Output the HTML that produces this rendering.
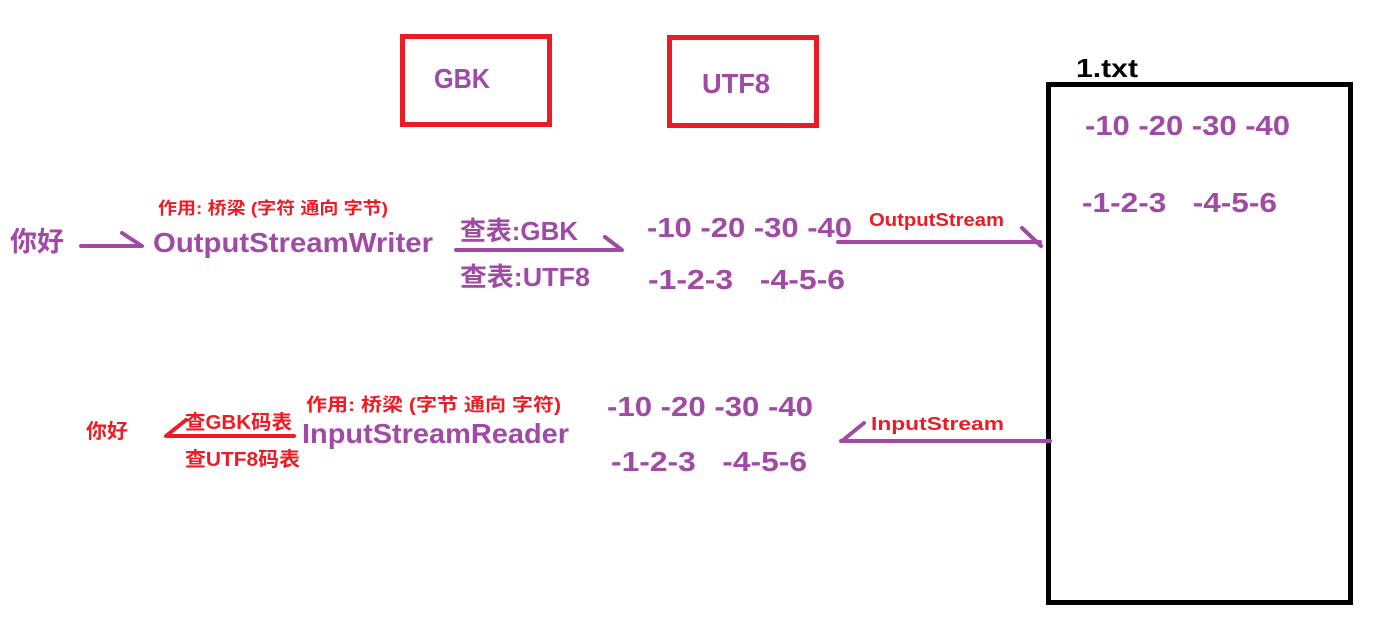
<!DOCTYPE html>
<html><head><meta charset="utf-8"><style>
html,body{margin:0;padding:0;background:#fff;}
svg{display:block}
text{font-family:"Liberation Sans","Noto Sans CJK SC",sans-serif;font-weight:bold;white-space:pre;}
.p{fill:#a04aa6}.r{fill:#ec1c24}.k{fill:#000}
</style></head><body>
<svg width="1394" height="629" viewBox="0 0 1394 629" xmlns="http://www.w3.org/2000/svg" xml:space="preserve">
<rect x="0" y="0" width="1394" height="629" fill="#fff"/>
<rect x="402.5" y="36.5" width="147" height="88" fill="none" stroke="#ec1c24" stroke-width="5"/>
<rect x="669.5" y="37.5" width="147" height="88" fill="none" stroke="#ec1c24" stroke-width="5"/>
<rect x="1048.5" y="84.5" width="302" height="518" fill="none" stroke="#000" stroke-width="5"/>
<text class="p" x="434" y="88" font-size="28" textLength="56" lengthAdjust="spacingAndGlyphs">GBK</text>
<text class="p" x="702" y="93" font-size="28" textLength="68" lengthAdjust="spacingAndGlyphs">UTF8</text>
<text class="k" x="1076" y="77" font-size="26" textLength="62" lengthAdjust="spacingAndGlyphs">1.txt</text>
<text class="p" x="1085" y="135" font-size="28" textLength="205" lengthAdjust="spacingAndGlyphs">-10 -20 -30 -40</text>
<text class="p" x="1082" y="212" font-size="28" textLength="195" lengthAdjust="spacingAndGlyphs">-1-2-3   -4-5-6</text>
<text class="p" x="10" y="251" font-size="27" textLength="54" lengthAdjust="spacingAndGlyphs">你好</text>
<text class="r" x="158" y="214" font-size="17" textLength="230" lengthAdjust="spacingAndGlyphs">作用: 桥梁 (字符 通向 字节)</text>
<text class="p" x="153" y="252" font-size="28" textLength="280" lengthAdjust="spacingAndGlyphs">OutputStreamWriter</text>
<text class="p" x="460" y="240" font-size="26" textLength="118" lengthAdjust="spacingAndGlyphs">查表:GBK</text>
<text class="p" x="460" y="286" font-size="26" textLength="130" lengthAdjust="spacingAndGlyphs">查表:UTF8</text>
<text class="p" x="647" y="237" font-size="28" textLength="205" lengthAdjust="spacingAndGlyphs">-10 -20 -30 -40</text>
<text class="p" x="648" y="289" font-size="28" textLength="197" lengthAdjust="spacingAndGlyphs">-1-2-3   -4-5-6</text>
<text class="r" x="869" y="226" font-size="18" textLength="135" lengthAdjust="spacingAndGlyphs">OutputStream</text>
<text class="r" x="86" y="438" font-size="20" textLength="42" lengthAdjust="spacingAndGlyphs">你好</text>
<text class="r" x="185" y="429" font-size="20" textLength="107" lengthAdjust="spacingAndGlyphs">查GBK码表</text>
<text class="r" x="185" y="466" font-size="20" textLength="115" lengthAdjust="spacingAndGlyphs">查UTF8码表</text>
<text class="r" x="306" y="411" font-size="18" textLength="255" lengthAdjust="spacingAndGlyphs">作用: 桥梁 (字节 通向 字符)</text>
<text class="p" x="302" y="443" font-size="28" textLength="267" lengthAdjust="spacingAndGlyphs">InputStreamReader</text>
<text class="p" x="607" y="416" font-size="28" textLength="206" lengthAdjust="spacingAndGlyphs">-10 -20 -30 -40</text>
<text class="p" x="611" y="471" font-size="28" textLength="196" lengthAdjust="spacingAndGlyphs">-1-2-3   -4-5-6</text>
<text class="r" x="871" y="430" font-size="18" textLength="133" lengthAdjust="spacingAndGlyphs">InputStream</text>
<g stroke="#a04aa6" stroke-width="4" stroke-linecap="round" fill="none">
<path d="M81 246 H140 M122 233 L142 246"/>
<path d="M456 250 H620 M605 237 L622 250"/>
<path d="M838 242 H1040 M1022 228 L1041 246"/>
<path d="M1050 441 H841 M864 423 L842 441"/>
</g>
<path d="M294 436 H167 M186 420 L166 436" stroke="#ec1c24" stroke-width="4" stroke-linecap="round" fill="none"/>
</svg>
</body></html>
